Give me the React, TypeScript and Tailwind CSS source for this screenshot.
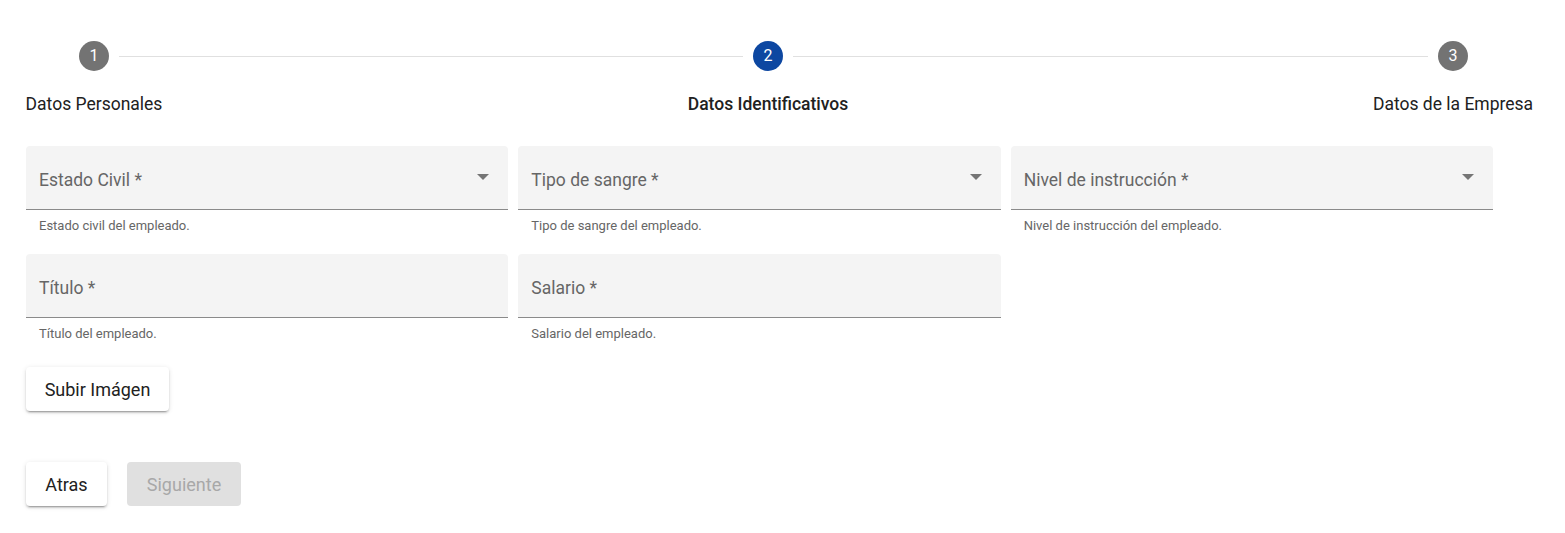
import React from "react";

const Step = ({ n, label, active }: { n: number; label: string; active?: boolean }) => (
  <div className="flex w-[30px] flex-col items-center">
    <div
      className={
        "flex h-[30px] w-[30px] items-center justify-center rounded-full text-[16px] text-white " +
        (active ? "bg-[#0d47a1]" : "bg-[#737373]")
      }
    >
      {n}
    </div>
    <div
      className={
        "mt-[23px] whitespace-nowrap text-[17.5px] leading-[20px] " +
        (active ? "font-medium text-[#212121]" : "text-[#212121]")
      }
    >
      {label}
    </div>
  </div>
);

const Field = ({ label, hint, select }: { label: string; hint: string; select?: boolean }) => (
  <div className="flex flex-col">
    <div className="flex h-[64px] items-center justify-between rounded-t-[4px] border-b border-[#8a8a8a] bg-[#f4f4f4] pl-[13px] pr-[19px]">
      <span className="pt-[6px] text-[17.5px] text-[#666666]">{label}</span>
      {select && (
        <svg width="12" height="6" viewBox="0 0 12 6" className="mt-[-2px]">
          <path d="M0 0 L12 0 L6 6 Z" fill="#757575" />
        </svg>
      )}
    </div>
    <div className="mt-[8px] px-[13px] text-[13px] leading-[16px] text-[#666666]">{hint}</div>
  </div>
);

const raised =
  "shadow-[0px_3px_1px_-2px_rgba(0,0,0,0.2),0px_2px_2px_0px_rgba(0,0,0,0.14),0px_1px_5px_0px_rgba(0,0,0,0.12)]";

export default function App() {
  return (
    <div className="h-[533px] w-full bg-white" style={{ fontFamily: "Roboto, 'Liberation Sans', sans-serif" }}>
      <div className="flex items-start pl-[79px] pr-[97px] pt-[41px]">
        <Step n={1} label="Datos Personales" />
        <div className="mx-[10px] mt-[15px] h-px w-[624px] bg-[#e0e0e0]" />
        <Step n={2} label="Datos Identificativos" active />
        <div className="mx-[10px] mt-[15px] h-px flex-1 bg-[#e0e0e0]" />
        <Step n={3} label="Datos de la Empresa" />
      </div>

      <div className="px-[26px] pt-[32px]">
        <div className="grid w-[1467px] grid-cols-3 gap-x-[10px] gap-y-[20px]">
          <Field label="Estado Civil *" hint="Estado civil del empleado." select />
          <Field label="Tipo de sangre *" hint="Tipo de sangre del empleado." select />
          <Field label="Nivel de instrucción *" hint="Nivel de instrucción del empleado." select />
          <Field label="Título *" hint="Título del empleado." />
          <Field label="Salario *" hint="Salario del empleado." />
        </div>

        <button
          className={
            "mt-[25px] flex h-[44px] w-[143px] items-center justify-center rounded-[4px] bg-white pt-[1px] text-[18px] text-[#212121] " +
            raised
          }
        >
          Subir Imágen
        </button>

        <div className="mt-[51px] flex gap-[20px]">
          <button
            className={
              "flex h-[44px] w-[81px] items-center justify-center rounded-[4px] bg-white pt-[1px] text-[18px] text-[#212121] " +
              raised
            }
          >
            Atras
          </button>
          <button className="flex h-[44px] w-[114px] items-center justify-center rounded-[4px] bg-[#e0e0e0] pt-[1px] text-[18px] text-[#a8a8a8]">
            Siguiente
          </button>
        </div>
      </div>
    </div>
  );
}
